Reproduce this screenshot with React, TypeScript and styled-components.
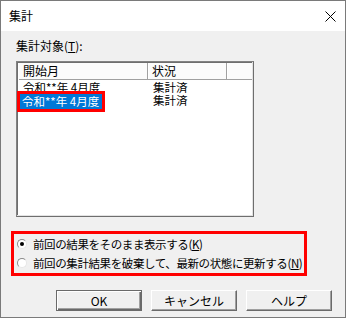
import React from 'react';
import styled, { createGlobalStyle } from 'styled-components';

const GlobalStyle = createGlobalStyle`
  html, body {
    margin: 0;
    padding: 0;
    background: #ffffff;
  }
  body {
    font-family: "Noto Sans CJK JP", "Liberation Sans", sans-serif;
    font-size: 12px;
    color: #000;
  }
`;

const Window = styled.div`
  width: 346px;
  height: 318px;
  box-sizing: border-box;
  border: 1px solid #7a7a7a;
  background: #f0f0f0;
  display: flex;
  flex-direction: column;
`;

const TitleBar = styled.div`
  height: 30px;
  background: #ffffff;
  display: flex;
  align-items: center;
  justify-content: space-between;
  padding: 0 9px 0 8px;
  flex-shrink: 0;
`;

const Title = styled.span`
  font-size: 12px;
  line-height: 14px;
`;

const Body = styled.div`
  flex: 1;
  display: flex;
  flex-direction: column;
  padding: 8px 13px 0 15px;
`;

const Label = styled.div`
  line-height: 14px;
  height: 14px;
  margin-bottom: 8px;
`;

const ListBox = styled.div`
  width: 238px;
  height: 156px;
  box-sizing: border-box;
  background: #ffffff;
  border-top: 1px solid #828282;
  border-left: 1px solid #828282;
  border-right: 1px solid #6e6e6e;
  border-bottom: 1px solid #6e6e6e;
  box-shadow: inset -1px -1px 0 #e3e3e3, inset 1px 1px 0 #6e6e6e;
  padding: 1px 1px 0 2px;
  display: flex;
  flex-direction: column;
`;

const HeaderRow = styled.div`
  display: flex;
  height: 16px;
  background: #fbfbfb;
  border-bottom: 1px solid #a0a0a0;
  box-shadow: 0 1px 0 #ffffff;
`;

const HeaderCell = styled.div<{ w?: number }>`
  ${p => (p.w ? `width: ${p.w}px;` : 'flex: 1;')}
  box-sizing: border-box;
  padding-left: 4px;
  line-height: 16px;
  border-right: ${p => (p.w ? '1px solid #a0a0a0' : 'none')};
  box-shadow: ${p => (p.w ? '1px 0 0 #ffffff' : 'none')};
`;

const Rows = styled.div`
  padding-top: 1px;
  display: flex;
  flex-direction: column;
`;

const Row = styled.div`
  display: flex;
  height: 13px;
  line-height: 13px;
`;

const Cell = styled.div<{ w?: number }>`
  ${p => (p.w ? `width: ${p.w}px;` : 'flex: 1;')}
  box-sizing: border-box;
  padding-left: 4px;
  white-space: nowrap;
  font-size: 11.5px;
`;

const Selected = styled.span`
  display: inline-block;
  margin: -3px 0 0 -6px;
  padding: 0 3px 0 2px;
  height: 15px;
  line-height: 15px;
  background: #0078d7;
  color: #ffffff;
  border: 3px solid #ff0000;
`;

const RadioGroup = styled.div`
  margin: 14px 0 0 -5px;
  width: 296px;
  height: 45px;
  box-sizing: border-box;
  border: 3px solid #ff0000;
  display: flex;
  flex-direction: column;
  justify-content: space-between;
  padding: 3px 0 3px 3px;
`;

const RadioRow = styled.label`
  display: flex;
  align-items: center;
  gap: 6px;
  height: 14px;
  line-height: 14px;
  white-space: nowrap;
`;

const RadioText = styled.span`
  font-size: 11.5px;
  letter-spacing: -0.4px;
`;

const RadioCircle = styled.span<{ checked?: boolean }>`
  width: 10px;
  height: 10px;
  flex-shrink: 0;
  box-sizing: border-box;
  border-radius: 50%;
  background: #ffffff;
  border: 1px solid;
  border-color: #8a8a8a #e6e6e6 #e6e6e6 #8a8a8a;
  display: flex;
  align-items: center;
  justify-content: center;
  &::after {
    content: '';
    width: 4px;
    height: 4px;
    border-radius: 50%;
    background: ${p => (p.checked ? '#000000' : 'transparent')};
  }
`;

const ButtonRow = styled.div`
  display: flex;
  justify-content: flex-end;
  gap: 9px;
  margin-top: 14px;
`;

const Button = styled.button<{ primary?: boolean }>`
  width: 86px;
  height: 21px;
  box-sizing: border-box;
  font-family: inherit;
  font-size: 12px;
  padding: 0;
  background: #f0f0f0;
  color: #000;
  border: 1px solid;
  border-color: ${p => (p.primary ? '#6a6a6a' : '#ffffff #6a6a6a #6a6a6a #ffffff')};
  box-shadow: ${p =>
    p.primary
      ? 'inset 1px 1px 0 #ffffff, inset -1px -1px 0 #6a6a6a, inset -2px -2px 0 #a0a0a0'
      : 'inset -1px -1px 0 #a0a0a0'};
`;

const App: React.FC = () => {
  return (
    <>
      <GlobalStyle />
      <Window>
        <TitleBar>
          <Title>集計</Title>
          <svg width="11" height="11" viewBox="0 0 11 11">
            <path d="M0.5 0.5 L10.5 10.5 M10.5 0.5 L0.5 10.5" stroke="#000" strokeWidth="1" />
          </svg>
        </TitleBar>
        <Body>
          <Label>
            集計対象(<u>T</u>):
          </Label>
          <ListBox>
            <HeaderRow>
              <HeaderCell w={129}>開始月</HeaderCell>
              <HeaderCell w={79}>状況</HeaderCell>
              <HeaderCell />
            </HeaderRow>
            <Rows>
              <Row>
                <Cell w={130}>令和**年 4月度</Cell>
                <Cell>集計済</Cell>
              </Row>
              <Row>
                <Cell w={130}>
                  <Selected>令和**年 4月度</Selected>
                </Cell>
                <Cell>集計済</Cell>
              </Row>
            </Rows>
          </ListBox>
          <RadioGroup>
            <RadioRow>
              <RadioCircle checked />
              <RadioText>
                前回の結果をそのまま表示する(<u>K</u>)
              </RadioText>
            </RadioRow>
            <RadioRow>
              <RadioCircle />
              <RadioText>
                前回の集計結果を破棄して、最新の状態に更新する(<u>N</u>)
              </RadioText>
            </RadioRow>
          </RadioGroup>
          <ButtonRow>
            <Button primary>OK</Button>
            <Button>キャンセル</Button>
            <Button>ヘルプ</Button>
          </ButtonRow>
        </Body>
      </Window>
    </>
  );
};

export default App;
